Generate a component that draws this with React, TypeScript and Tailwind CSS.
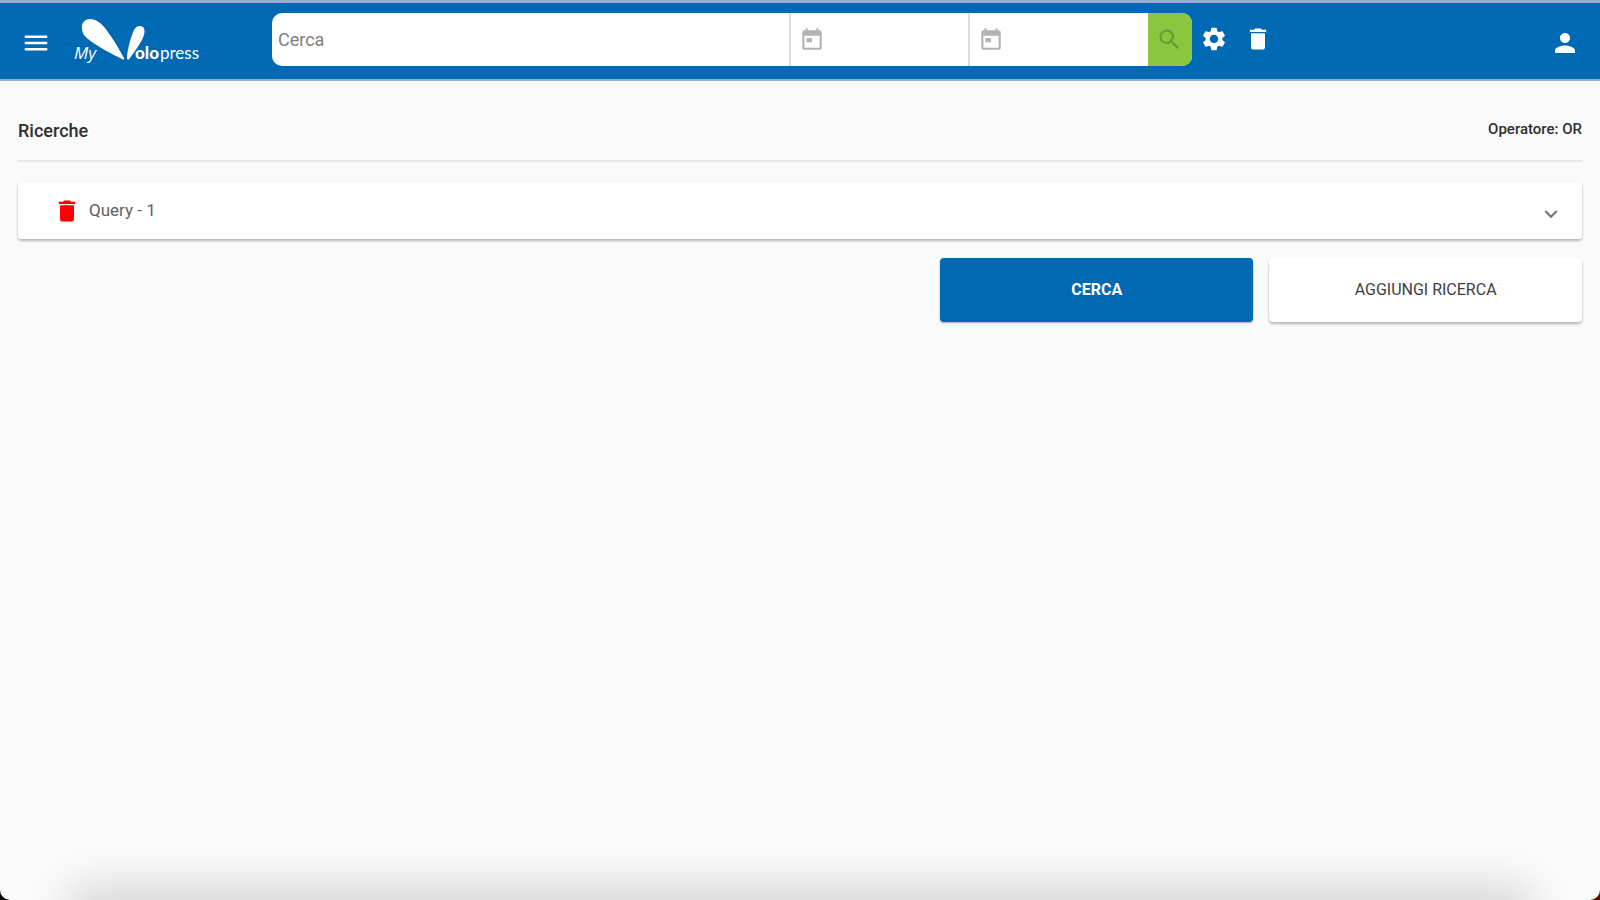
import { useState } from "react";
import {
  MdDelete,
  MdExpandMore,
  MdMenu,
  MdPerson,
  MdSearch,
  MdSettings,
} from "react-icons/md";

function Logo() {
  return (
    <svg
      viewBox="0 0 128 48"
      className="h-12 w-32"
      fill="#fff"
      role="img"
      aria-label="My Volopress"
    >
      <path d="M8 12C7 6 11 2 16 2C22 2 27 6 31 11C38 20 44 30 50 41C50.500 42.500 49.500 43 48 42C38 37 24 30 14 22C10 19 8.500 16 8 12Z" />
      <path d="M53 41C53 35 56 22 60 13C62 9 66 8 69 10C72 13 70 19 68 23C64 30 60 35 56 41C55 43 53 43 53 41Z" />
      <text
        x="0"
        y="42"
        fontFamily="Open Sans, sans-serif"
        fontSize="17"
        fontStyle="italic"
      >
        My
      </text>
      <text
        x="61"
        y="42"
        fontFamily="Lato, sans-serif"
        fontSize="17"
        fontWeight="900"
      >
        olo
      </text>
      <text
        x="86"
        y="42"
        fontFamily="Lato, sans-serif"
        fontSize="17"
      >
        press
      </text>
    </svg>
  );
}

function DateField({ label }: { label: string }) {
  const [value, setValue] = useState("");

  return (
    <label className="flex w-[19.5%] items-center border-l-2 border-[#dcdcdc] pl-2">
      <svg
        viewBox="0 0 24 24"
        className="h-[26px] w-[26px] shrink-0"
        fill="#b4b4b4"
        aria-hidden="true"
      >
        <path d="M19 4h-1V2h-2v2H8V2H6v2H5a2 2 0 0 0-2 2v14c0 1.100.900 2 2 2h14c1.100 0 2-.900 2-2V6a2 2 0 0 0-2-2zm0 16H5V9h14v11z" />
        <path d="M7 11h5v4H7z" />
      </svg>
      <input
        type="text"
        aria-label={label}
        value={value}
        onChange={(e) => setValue(e.target.value)}
        className="h-full w-full min-w-0 px-2 text-base text-zinc-700 outline-none"
      />
    </label>
  );
}

function Header() {
  const [text, setText] = useState("");

  return (
    <header className="flex h-[81px] items-center border-t-[3px] border-b-2 border-[#9aacd2] bg-[#0069b4] pr-5 pb-1 pl-[21px] text-white">
      <button type="button" aria-label="Menu" className="mt-2">
        <MdMenu size={30} />
      </button>
      <a href="#" className="mt-1 ml-[23px]">
        <Logo />
      </a>
      <form
        onSubmit={(e) => e.preventDefault()}
        className="ml-[70px] flex h-[53px] w-[59%] shrink-0 overflow-hidden rounded-[10px] bg-white"
      >
        <input
          type="text"
          aria-label="Cerca"
          placeholder="Cerca"
          value={text}
          onChange={(e) => setText(e.target.value)}
          className="min-w-0 flex-1 px-1.5 pt-0.5 text-lg text-zinc-700 outline-none placeholder:text-[#808080]"
        />
        <DateField label="Dal" />
        <DateField label="Al" />
        <button
          type="submit"
          aria-label="Avvia ricerca"
          className="flex w-11 items-center justify-center bg-[#8cc63e] text-[#649c35]"
        >
          <MdSearch size={27} />
        </button>
      </form>
      <button type="button" aria-label="Impostazioni" className="ml-2">
        <MdSettings size={28} />
      </button>
      <button type="button" aria-label="Svuota" className="ml-4">
        <MdDelete size={28} />
      </button>
      <button type="button" aria-label="Profilo" className="mt-2 ml-auto">
        <MdPerson size={30} />
      </button>
    </header>
  );
}

export default function App() {
  return (
    <div className="min-h-screen bg-linear-to-r from-black to-[#5c0a00] font-[Roboto,sans-serif]">
      <div className="relative flex min-h-screen flex-col overflow-hidden rounded-b-[10px] bg-[#fafafa]">
        <Header />
        <main className="px-[18px] pt-8">
          <div className="flex h-[49px] items-start justify-between border-b-2 border-[#e8e8e8] pt-1.5 text-[#303030]">
            <h1 className="text-lg leading-6 font-medium">Ricerche</h1>
            <p className="text-[15px] leading-5 font-medium">Operatore: OR</p>
          </div>

          <section className="mt-5 flex h-[57px] items-center rounded-sm bg-white pr-[18px] pl-[35px] shadow-[0_2px_3px_rgba(0,0,0,0.28)]">
            <button
              type="button"
              aria-label="Elimina query"
              className="text-[#ff0000]"
            >
              <MdDelete size={28} />
            </button>
            <h2 className="ml-2 text-[17px] text-[#606060]">Query - 1</h2>
            <button
              type="button"
              aria-label="Espandi"
              className="mt-1.5 ml-auto text-[#757575]"
            >
              <MdExpandMore size={26} />
            </button>
          </section>

          <div className="mt-[19px] flex justify-end gap-4">
            <button
              type="button"
              className="h-16 w-1/5 rounded-sm bg-[#0069b4] text-base font-bold text-white shadow-[0_1px_2px_rgba(0,0,0,0.35)]"
            >
              CERCA
            </button>
            <button
              type="button"
              className="h-16 w-1/5 rounded-sm bg-white text-base text-[#404040] shadow-[0_2px_3px_rgba(0,0,0,0.28)]"
            >
              AGGIUNGI RICERCA
            </button>
          </div>
        </main>
        <div className="pointer-events-none absolute inset-x-20 -bottom-4 h-4 shadow-[0_0_44px_10px_rgba(0,0,0,0.18)]" />
      </div>
    </div>
  );
}
